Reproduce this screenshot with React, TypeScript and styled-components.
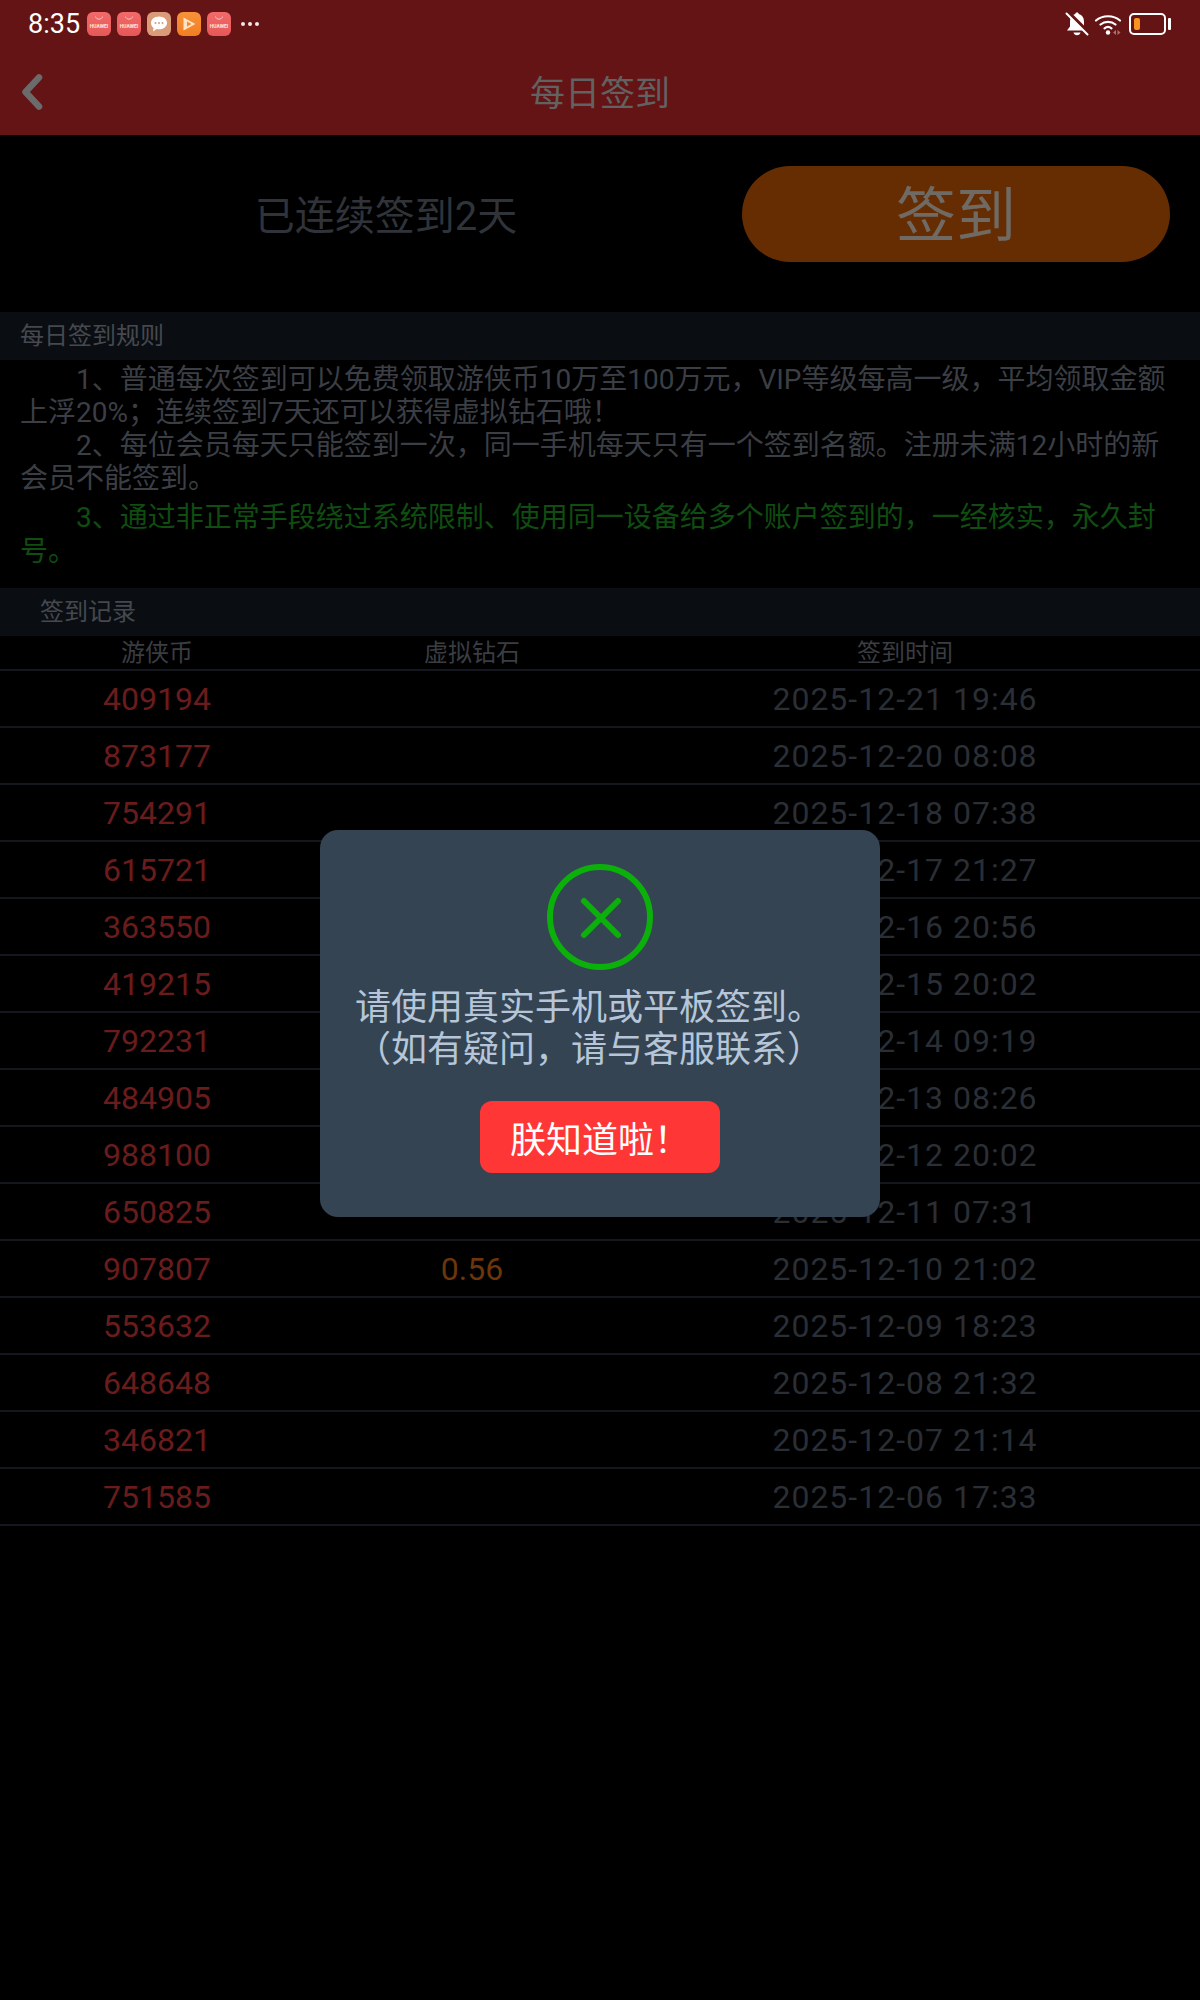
import { FC } from 'react';
import styled, { createGlobalStyle } from 'styled-components';

const FONT = `Roboto, "Noto Sans CJK SC", sans-serif`;

interface SignRecord {
  coins: string;
  diamonds?: string;
  time: string;
}

const records: SignRecord[] = [
  { coins: '409194', time: '2025-12-21 19:46' },
  { coins: '873177', time: '2025-12-20 08:08' },
  { coins: '754291', time: '2025-12-18 07:38' },
  { coins: '615721', time: '2025-12-17 21:27' },
  { coins: '363550', time: '2025-12-16 20:56' },
  { coins: '419215', time: '2025-12-15 20:02' },
  { coins: '792231', time: '2025-12-14 09:19' },
  { coins: '484905', time: '2025-12-13 08:26' },
  { coins: '988100', time: '2025-12-12 20:02' },
  { coins: '650825', time: '2025-12-11 07:31' },
  { coins: '907807', diamonds: '0.56', time: '2025-12-10 21:02' },
  { coins: '553632', time: '2025-12-09 18:23' },
  { coins: '648648', time: '2025-12-08 21:32' },
  { coins: '346821', time: '2025-12-07 21:14' },
  { coins: '751585', time: '2025-12-06 17:33' },
];

const HuaweiIcon: FC = () => (
  <HuaweiTile>
    <svg width="10" height="5" viewBox="0 0 10 5" fill="none">
      <path d="M1.5 .5C2 4 8 4 8.5 .5" stroke="#ffd9d9" strokeWidth="0.8" />
    </svg>
    <HuaweiText>HUAWEI</HuaweiText>
  </HuaweiTile>
);

const App: FC = () => {
  return (
    <Page>
      <GlobalStyle />
      <Header>
        <StatusBar>
          <StatusLeft>
            <Clock>8:35</Clock>
            <HuaweiIcon />
            <HuaweiIcon />
            <ChatTile>
              <svg width="20" height="18" viewBox="0 0 20 18">
                <path d="M10 1.5c4.600 0 8 2.800 8 6.400s-3.400 6.400-8 6.400c-.8 0-1.500-.1-2.200-.2L4 16.500l.6-3.600C3 11.700 2 10 2 7.900 2 4.300 5.400 1.500 10 1.500z" fill="#fff" />
                <circle cx="6.500" cy="8" r="1" fill="#d99b78" />
                <circle cx="10" cy="8" r="1" fill="#d99b78" />
                <circle cx="13.500" cy="8" r="1" fill="#d99b78" />
              </svg>
            </ChatTile>
            <VideoTile>
              <svg width="18" height="18" viewBox="0 0 18 18">
                <path d="M3.500 2.500v13L15.500 9z" fill="#ffe3c4" />
                <path d="M7 6.500v5L11.500 9z" fill="#f5872c" />
              </svg>
            </VideoTile>
            <HuaweiIcon />
            <MoreDots>
              <i />
              <i />
              <i />
            </MoreDots>
          </StatusLeft>
          <StatusRight>
            <svg width="24" height="26" viewBox="0 0 24 26">
              <path d="M12 1.500c1 0 1.700.7 1.800 1.600 3.400.9 5.200 3.700 5.200 7.400v5l3 4H2l3-4v-5c0-3.700 1.800-6.500 5.200-7.400.1-.9.800-1.600 1.800-1.600z" fill="#fff" />
              <path d="M8.500 21.500h7c-.5 1.800-1.700 2.800-3.500 2.800s-3-1-3.500-2.800z" fill="#fff" />
              <path d="M3.500 1.500L24 22" stroke="#641414" strokeWidth="3.500" />
              <path d="M1.500 2.500L22.500 23.500" stroke="#fff" strokeWidth="2" strokeLinecap="round" />
            </svg>
            <WifiIcon width="28" height="24" viewBox="0 0 28 24" fill="none">
              <path d="M2 8.500c6.500-5.700 17.500-5.700 24 0" stroke="#fff" strokeWidth="2.200" strokeLinecap="round" />
              <path d="M6.500 12.500c4.200-3.600 10.800-3.600 15 0" stroke="#fff" strokeWidth="2.200" strokeLinecap="round" />
              <path d="M10.500 16.300c2-1.600 5-1.600 7 0" stroke="#fff" strokeWidth="2.200" strokeLinecap="round" />
              <circle cx="14" cy="20.500" r="2.200" fill="#fff" />
              <path d="M22 18v5l-3-2.500zM23.500 18v5l3-2.500z" fill="#a9706f" />
            </WifiIcon>
            <Battery>
              <BatteryLevel />
            </Battery>
            <BatteryCap />
          </StatusRight>
        </StatusBar>
        <NavBar>
          <BackIcon width="22" height="36" viewBox="0 0 22 36" fill="none">
            <path d="M18 3.500L4.500 18 18 32.500" stroke="#6b6b6b" strokeWidth="6.500" strokeLinecap="round" strokeLinejoin="round" />
          </BackIcon>
          <NavTitle>每日签到</NavTitle>
        </NavBar>
      </Header>

      <SignPanel>
        <StreakText>已连续签到2天</StreakText>
        <SignButton>签到</SignButton>
      </SignPanel>

      <SectionHeading>每日签到规则</SectionHeading>
      <Rules>
        <Rule>
          1、普通每次签到可以免费领取游侠币10万至100万元，VIP等级每高一级，平均领取金额上浮20%；连续签到7天还可以获得虚拟钻石哦！
        </Rule>
        <Rule>
          2、每位会员每天只能签到一次，同一手机每天只有一个签到名额。注册未满12小时的新会员不能签到。
        </Rule>
        <WarningRule>
          3、通过非正常手段绕过系统限制、使用同一设备给多个账户签到的，一经核实，永久封号。
        </WarningRule>
      </Rules>

      <SectionHeading $inset>签到记录</SectionHeading>
      <TableHead>
        <span>游侠币</span>
        <span>虚拟钻石</span>
        <span>签到时间</span>
      </TableHead>
      {records.map((record) => (
        <TableRow key={record.time}>
          <Coins>{record.coins}</Coins>
          <Diamonds>{record.diamonds}</Diamonds>
          <SignTime>{record.time}</SignTime>
        </TableRow>
      ))}

      <DialogLayer>
        <Dialog>
          <svg width="106" height="106" viewBox="0 0 106 106" fill="none">
            <circle cx="53" cy="53" r="50" stroke="#0bb00b" strokeWidth="6" />
            <path d="M37 37L71 71M71 37L37 71" stroke="#0bb00b" strokeWidth="6" strokeLinecap="round" />
          </svg>
          <DialogText>
            请使用真实手机或平板签到。
            <br />
            （如有疑问，请与客服联系）
          </DialogText>
          <ConfirmButton>朕知道啦！</ConfirmButton>
        </Dialog>
      </DialogLayer>
    </Page>
  );
};

const GlobalStyle = createGlobalStyle`
  html, body {
    margin: 0;
    background: #000;
  }
`;

const Page = styled.div`
  position: relative;
  width: 1200px;
  height: 2000px;
  overflow: hidden;
  background: #000;
  font-family: ${FONT};
`;

const Header = styled.header`
  height: 135px;
  background: #641414;
`;

const StatusBar = styled.div`
  height: 48px;
  display: flex;
  justify-content: space-between;
  align-items: center;
  padding: 0 29px 0 28px;
`;

const StatusLeft = styled.div`
  display: flex;
  align-items: center;
  gap: 6px;
`;

const Clock = styled.span`
  width: 53px;
  font-size: 27px;
  color: #fff;
`;

const Tile = styled.div`
  width: 24px;
  height: 24px;
  border-radius: 6px;
  display: flex;
  flex-direction: column;
  align-items: center;
  justify-content: center;
`;

const HuaweiTile = styled(Tile)`
  justify-content: flex-start;
  padding-top: 4px;
  box-sizing: border-box;
  background: linear-gradient(#f26a6a, #e65858);
`;

const HuaweiText = styled.span`
  margin-top: 2px;
  font-size: 5px;
  line-height: 6px;
  font-weight: 700;
  color: #ffe6e6;
`;

const ChatTile = styled(Tile)`
  background: #d99b78;
`;

const VideoTile = styled(Tile)`
  background: linear-gradient(#f7923a, #f27f22);
`;

const MoreDots = styled.div`
  display: flex;
  gap: 3px;
  margin-left: 4px;

  i {
    width: 4px;
    height: 4px;
    border-radius: 50%;
    background: #f2e6e6;
  }
`;

const StatusRight = styled.div`
  display: flex;
  align-items: center;
`;

const WifiIcon = styled.svg`
  margin-left: 5px;
`;

const Battery = styled.div`
  box-sizing: border-box;
  width: 37px;
  height: 22px;
  margin-left: 7px;
  padding: 3px;
  border: 2px solid #fff;
  border-radius: 5px;
`;

const BatteryLevel = styled.div`
  width: 6px;
  height: 100%;
  border-radius: 2px;
  background: #f7931e;
`;

const BatteryCap = styled.div`
  width: 3px;
  height: 12px;
  margin-left: 2px;
  border-radius: 1px;
  background: #fff;
`;

const NavBar = styled.div`
  position: relative;
  height: 87px;
  padding-bottom: 2px;
  box-sizing: border-box;
  display: flex;
  align-items: center;
  justify-content: center;
`;

const BackIcon = styled.svg`
  position: absolute;
  left: 21px;
  top: 26px;
`;

const NavTitle = styled.h1`
  margin: 0;
  font-size: 35px;
  font-weight: 400;
  color: #626262;
`;

const SignPanel = styled.section`
  height: 177px;
  box-sizing: border-box;
  padding-top: 31px;
  display: flex;
`;

const StreakText = styled.div`
  box-sizing: border-box;
  flex: 0 0 742px;
  height: 96px;
  padding-left: 30px;
  line-height: 101px;
  text-align: center;
  font-size: 40px;
  color: #30343a;
`;

const SignButton = styled.button`
  width: 428px;
  height: 96px;
  padding: 0 0 7px;
  border: none;
  border-radius: 48px;
  background: #662d02;
  font-family: ${FONT};
  font-size: 60px;
  color: #706a64;
`;

const SectionHeading = styled.h2<{ $inset?: boolean }>`
  margin: 0;
  height: 48px;
  line-height: 48px;
  padding-left: ${(p) => (p.$inset ? 40 : 20)}px;
  background: #0a0e13;
  font-size: 24px;
  font-weight: 400;
  color: #45494f;
`;

const Rules = styled.section`
  height: 228px;
  box-sizing: border-box;
  padding: 3px 20px 0;
`;

const Rule = styled.p`
  margin: 0;
  text-indent: 56px;
  font-size: 28px;
  line-height: 33px;
  color: #3b3f45;
`;

const WarningRule = styled(Rule)`
  margin-top: 6px;
  line-height: 34px;
  color: #0f4d10;
`;

const columns = `
  display: grid;
  grid-template-columns: 314px 316px 550px;
  text-align: center;
`;

const TableHead = styled.div`
  ${columns}
  height: 33px;
  line-height: 34px;
  border-bottom: 2px solid #15171f;
  font-size: 24px;
  color: #3a3d42;
`;

const TableRow = styled.div`
  ${columns}
  height: 55px;
  line-height: 57px;
  border-bottom: 2px solid #15171f;
  font-size: 32px;
`;

const Coins = styled.span`
  color: #6a1c1c;
`;

const Diamonds = styled.span`
  color: #6c350a;
`;

const SignTime = styled.span`
  letter-spacing: 1px;
  color: #2a2e35;
`;

const DialogLayer = styled.div`
  position: absolute;
  inset: 0;
  display: flex;
  justify-content: center;
  padding-top: 830px;
`;

const Dialog = styled.div`
  box-sizing: border-box;
  width: 560px;
  height: 387px;
  padding-top: 34px;
  border-radius: 18px;
  background: #354453;
  display: flex;
  flex-direction: column;
  align-items: center;
`;

const DialogText = styled.p`
  align-self: flex-start;
  margin: 17px 0 0 35px;
  font-size: 36px;
  line-height: 42px;
  white-space: nowrap;
  color: #b6c6d8;
`;

const ConfirmButton = styled.button`
  width: 240px;
  height: 72px;
  margin-top: 30px;
  padding: 0;
  border: none;
  border-radius: 12px;
  background: #ff3636;
  font-family: ${FONT};
  font-size: 36px;
  color: #fff;
`;

export default App;
